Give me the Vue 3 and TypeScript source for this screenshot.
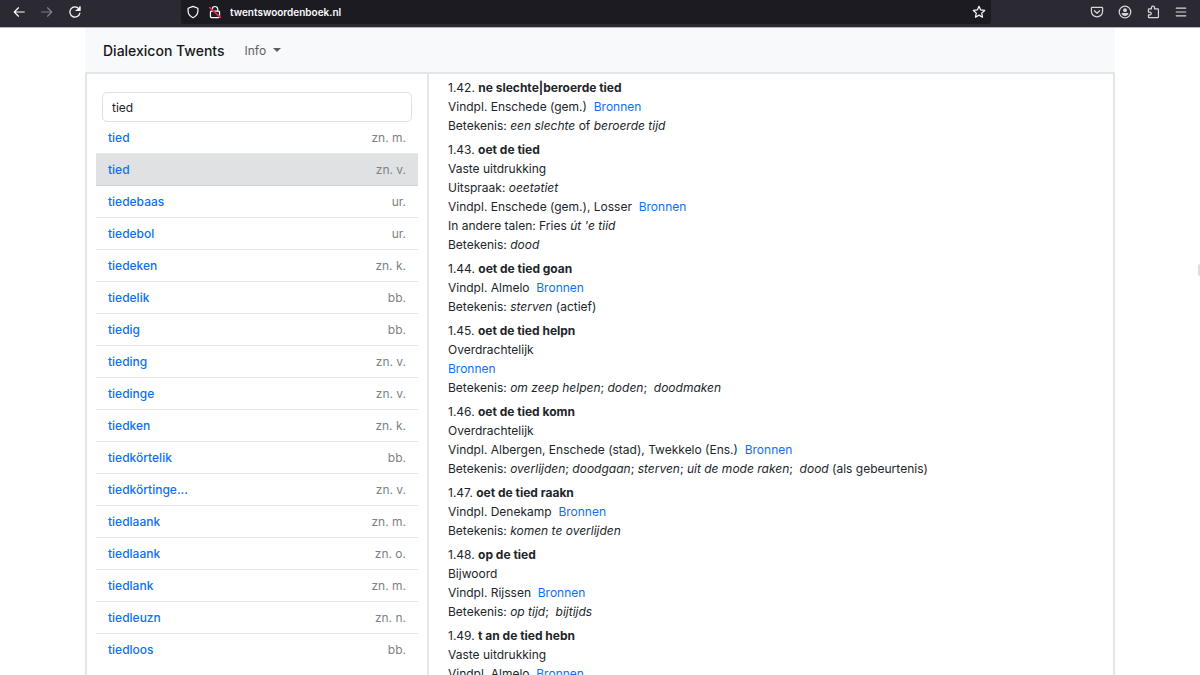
<script setup lang="ts">
import { ref } from 'vue'

interface Word {
  text: string
  kind: string
}

type Style = 'plain' | 'italic' | 'link'

interface Segment {
  text: string
  style: Style
}

interface Entry {
  number: string
  title: string
  lines: Segment[][]
}

const query = ref('tied')
const selected = ref(1)

const words: Word[] = [
  { text: 'tied', kind: 'zn. m.' },
  { text: 'tied', kind: 'zn. v.' },
  { text: 'tiedebaas', kind: 'ur.' },
  { text: 'tiedebol', kind: 'ur.' },
  { text: 'tiedeken', kind: 'zn. k.' },
  { text: 'tiedelik', kind: 'bb.' },
  { text: 'tiedig', kind: 'bb.' },
  { text: 'tieding', kind: 'zn. v.' },
  { text: 'tiedinge', kind: 'zn. v.' },
  { text: 'tiedken', kind: 'zn. k.' },
  { text: 'tiedkörtelik', kind: 'bb.' },
  { text: 'tiedkörtinge...', kind: 'zn. v.' },
  { text: 'tiedlaank', kind: 'zn. m.' },
  { text: 'tiedlaank', kind: 'zn. o.' },
  { text: 'tiedlank', kind: 'zn. m.' },
  { text: 'tiedleuzn', kind: 'zn. n.' },
  { text: 'tiedloos', kind: 'bb.' },
]

const p = (text: string): Segment => ({ text, style: 'plain' })
const i = (text: string): Segment => ({ text, style: 'italic' })
const sources: Segment = { text: 'Bronnen', style: 'link' }

const entries: Entry[] = [
  {
    number: '1.42.',
    title: 'ne slechte|beroerde tied',
    lines: [
      [p('Vindpl. Enschede (gem.)  '), sources],
      [p('Betekenis: '), i('een slechte'), p(' of '), i('beroerde tijd')],
    ],
  },
  {
    number: '1.43.',
    title: 'oet de tied',
    lines: [
      [p('Vaste uitdrukking')],
      [p('Uitspraak: '), i('oeetətiet')],
      [p('Vindpl. Enschede (gem.), Losser  '), sources],
      [p('In andere talen: Fries '), i("út 'e tiid")],
      [p('Betekenis: '), i('dood')],
    ],
  },
  {
    number: '1.44.',
    title: 'oet de tied goan',
    lines: [
      [p('Vindpl. Almelo  '), sources],
      [p('Betekenis: '), i('sterven'), p(' (actief)')],
    ],
  },
  {
    number: '1.45.',
    title: 'oet de tied helpn',
    lines: [
      [p('Overdrachtelijk')],
      [sources],
      [p('Betekenis: '), i('om zeep helpen'), p('; '), i('doden'), p(';  '), i('doodmaken')],
    ],
  },
  {
    number: '1.46.',
    title: 'oet de tied komn',
    lines: [
      [p('Overdrachtelijk')],
      [p('Vindpl. Albergen, Enschede (stad), Twekkelo (Ens.)  '), sources],
      [
        p('Betekenis: '), i('overlijden'), p('; '), i('doodgaan'), p('; '), i('sterven'), p('; '),
        i('uit de mode raken'), p(';  '), i('dood'), p(' (als gebeurtenis)'),
      ],
    ],
  },
  {
    number: '1.47.',
    title: 'oet de tied raakn',
    lines: [
      [p('Vindpl. Denekamp  '), sources],
      [p('Betekenis: '), i('komen te overlijden')],
    ],
  },
  {
    number: '1.48.',
    title: 'op de tied',
    lines: [
      [p('Bijwoord')],
      [p('Vindpl. Rijssen  '), sources],
      [p('Betekenis: '), i('op tijd'), p(';  '), i('bijtijds')],
    ],
  },
  {
    number: '1.49.',
    title: 't an de tied hebn',
    lines: [
      [p('Vaste uitdrukking')],
      [p('Vindpl. Almelo  '), sources],
    ],
  },
]

const tags: Record<Style, string> = { plain: 'span', italic: 'em', link: 'a' }
</script>

<template>
  <div class="window">
    <div class="toolbar">
      <div class="nav-buttons">
        <button type="button" aria-label="Terug">
          <svg viewBox="0 0 16 16"><path d="M14 8H2.6M7.4 3.2 2.6 8l4.8 4.8" /></svg>
        </button>
        <button type="button" aria-label="Vooruit" disabled>
          <svg viewBox="0 0 16 16"><path d="M2 8h11.4M8.6 3.2 13.4 8l-4.8 4.8" /></svg>
        </button>
        <button type="button" aria-label="Vernieuwen">
          <svg viewBox="0 0 16 16"><path d="M13.6 9.2A5.8 5.8 0 1 1 12.4 4.3M13.7 1.8v4.4H9.3" /><path class="solid" d="M13.9 1.8v4.6H9.3z" /></svg>
        </button>
      </div>
      <div class="address">
        <button type="button" aria-label="Bescherming">
          <svg viewBox="0 0 16 16"><path d="M8 1.6 13.6 3.7v3.2c0 3.3-2.1 6-5.6 7.6-3.5-1.6-5.6-4.3-5.6-7.6V3.7z" /></svg>
        </button>
        <button type="button" aria-label="Verbinding niet beveiligd">
          <svg viewBox="0 0 16 16">
            <path d="M4.9 7V4.8a3.1 3.1 0 0 1 6.2 0V7M4 7h8a1.2 1.2 0 0 1 1.2 1.2v4.9A1.2 1.2 0 0 1 12 14.3H4a1.2 1.2 0 0 1-1.2-1.2V8.2A1.2 1.2 0 0 1 4 7z" />
            <path class="slash" d="M2 3 14 14" />
          </svg>
        </button>
        <input class="url" type="text" value="twentswoordenboek.nl" aria-label="Adres" />
        <button type="button" aria-label="Bladwijzer">
          <svg viewBox="0 0 16 16"><path d="m8 1.5 1.9 4.1 4.6.6-3.4 3.1.9 4.6-4-2.3-4 2.3.9-4.6L1.5 6.2l4.6-.6z" /></svg>
        </button>
      </div>
      <div class="tools">
        <button type="button" aria-label="Pocket">
          <svg viewBox="0 0 16 16"><path d="M2.6 2.6h10.8a1 1 0 0 1 1 1v3.6a6.4 6.4 0 0 1-12.8 0V3.6a1 1 0 0 1 1-1zM5 6.5l3 2.9 3-2.9" /></svg>
        </button>
        <button type="button" aria-label="Account">
          <svg viewBox="0 0 16 16"><circle cx="8" cy="8" r="6.6" /><circle class="solid" cx="8" cy="5.9" r="2.2" /><path class="solid" d="M4.2 9.2h7.6v1.4a4.6 4.6 0 0 1-7.6 0z" /></svg>
        </button>
        <button type="button" aria-label="Extensies">
          <svg viewBox="0 0 16 16"><path d="M6.2 4.5V3.2a1.8 1.8 0 0 1 3.6 0v1.3h3.6a.8.8 0 0 1 .8.8v8.4a.8.8 0 0 1-.8.8H3.6a.8.8 0 0 1-.8-.8v-2.4h1.6a1.6 1.6 0 0 0 0-3.2H2.8V5.3a.8.8 0 0 1 .8-.8z" /></svg>
        </button>
        <button type="button" aria-label="Menu">
          <svg viewBox="0 0 16 16"><path d="M2.6 3.6h10.8M2.6 8h10.8M2.6 12.4h10.8" /></svg>
        </button>
      </div>
    </div>

    <div class="container">
      <header class="navbar">
        <a class="brand" href="#">Dialexicon Twents</a>
        <button class="dropdown" type="button" aria-haspopup="true">Info</button>
      </header>
      <div class="columns">
        <aside class="sidebar">
          <input v-model="query" class="search" type="text" aria-label="Zoek een woord" />
          <ul class="words">
            <li v-for="(word, index) in words" :key="index" :class="{ active: index === selected }">
              <a href="#" @click.prevent="selected = index">{{ word.text }}</a>
              <span>{{ word.kind }}</span>
            </li>
          </ul>
        </aside>
        <main class="content">
          <article v-for="entry in entries" :key="entry.number">
            <p>{{ entry.number }} <b>{{ entry.title }}</b></p>
            <p v-for="(line, n) in entry.lines" :key="n"><component :is="tags[seg.style]" v-for="(seg, m) in line" :key="m" :href="seg.style === 'link' ? '#' : undefined">{{ seg.text }}</component></p>
          </article>
        </main>
      </div>
    </div>
    <div class="scroll-thumb"></div>
  </div>
</template>

<style>
body {
  margin: 0;
  overflow: hidden;
}
</style>

<style scoped>
.window {
  position: relative;
  display: flex;
  flex-direction: column;
  height: 100vh;
  overflow: hidden;
  background: #fff;
  color: #212529;
  font-family: Inter, "Liberation Sans", sans-serif;
  font-size: 12px;
}

button {
  margin: 0;
  padding: 0;
  border: 0;
  background: none;
  color: inherit;
  font: inherit;
}

a {
  color: #0d6efd;
  text-decoration: none;
}

.toolbar {
  display: flex;
  flex: none;
  align-items: flex-start;
  height: 27px;
  border-bottom: 1px solid #b5b5ba;
  background: #2b2a33;
  color: #fbfbfe;
}

.toolbar button {
  display: flex;
}

.toolbar svg {
  width: 14px;
  height: 14px;
  fill: none;
  stroke: currentColor;
  stroke-width: 1.4;
  stroke-linecap: round;
  stroke-linejoin: round;
}

.toolbar .solid {
  fill: currentColor;
  stroke: none;
}

.toolbar .slash {
  stroke: #e22850;
  stroke-width: 2;
}

.toolbar button:disabled {
  color: #807f87;
}

.nav-buttons,
.address,
.tools {
  display: flex;
  align-items: center;
  box-sizing: border-box;
  height: 24px;
}

.nav-buttons {
  gap: 14px;
  width: 181px;
  padding-left: 12px;
}

.address {
  flex: 1;
  gap: 8px;
  padding: 0 5px;
  border-radius: 0 0 3px 3px;
  background: #1c1b22;
}

.url {
  flex: 1;
  min-width: 0;
  padding: 0;
  border: 0;
  outline: 0;
  background: none;
  color: #fbfbfe;
  font: 600 10px/16px Inter, "Liberation Sans", sans-serif;
}

.tools {
  justify-content: flex-end;
  gap: 14px;
  width: 209px;
  padding-right: 12px;
  color: #d6d6dc;
}

.container {
  display: flex;
  flex: 1;
  flex-direction: column;
  box-sizing: border-box;
  width: 100%;
  max-width: 1030px;
  min-height: 0;
  margin: 0 auto;
}

.navbar {
  display: flex;
  flex: none;
  align-items: center;
  gap: 20px;
  height: 44px;
  padding: 0 18px;
  background: #f8f9fa;
}

.brand {
  color: #16181a;
  font-size: 14px;
  font-weight: 500;
}

.navbar .dropdown {
  display: flex;
  align-items: center;
  gap: 7px;
  color: #5c5f61;
}

.dropdown::after {
  content: "";
  border-top: 4px solid currentColor;
  border-right: 4px solid transparent;
  border-left: 4px solid transparent;
}

.columns {
  display: grid;
  flex: 1;
  grid-template-columns: 1fr 2fr;
  min-height: 0;
  border: 2px solid #e3e6e9;
  border-bottom: 0;
}

.sidebar {
  min-width: 0;
  overflow: hidden;
  padding: 18px 9px 0;
  border-right: 2px solid #e3e6e9;
}

.search {
  display: block;
  box-sizing: border-box;
  width: calc(100% - 12px);
  height: 30px;
  margin: 0 6px;
  padding: 0 9px;
  border: 1px solid #dee2e6;
  border-radius: 5px;
  outline: 0;
  background: #fff;
  color: #212529;
  font: 400 12px/20px Inter, "Liberation Sans", sans-serif;
}

.words {
  margin: 0;
  padding: 0;
  list-style: none;
}

.words li {
  display: flex;
  align-items: center;
  justify-content: space-between;
  box-sizing: border-box;
  height: 32px;
  padding: 0 12px;
  border-bottom: 1px solid #e6e9eb;
}

.words a {
  font-weight: 500;
}

.words span {
  color: #7b8187;
}

.words .active {
  border-color: #cfd2d4;
  background: #e0e1e3;
}

.words li:last-child {
  border-bottom-color: transparent;
}

.content {
  min-width: 0;
  overflow: hidden;
  padding: 4px 19px 0;
}

.content article {
  margin-bottom: 5px;
}

.content p {
  margin: 0;
  line-height: 19px;
  white-space: pre-wrap;
}

.content b {
  font-weight: 700;
}

.scroll-thumb {
  position: absolute;
  top: 264px;
  right: 0;
  width: 2px;
  height: 12px;
  border-radius: 2px 0 0 2px;
  background: #dcdcdc;
}
</style>
